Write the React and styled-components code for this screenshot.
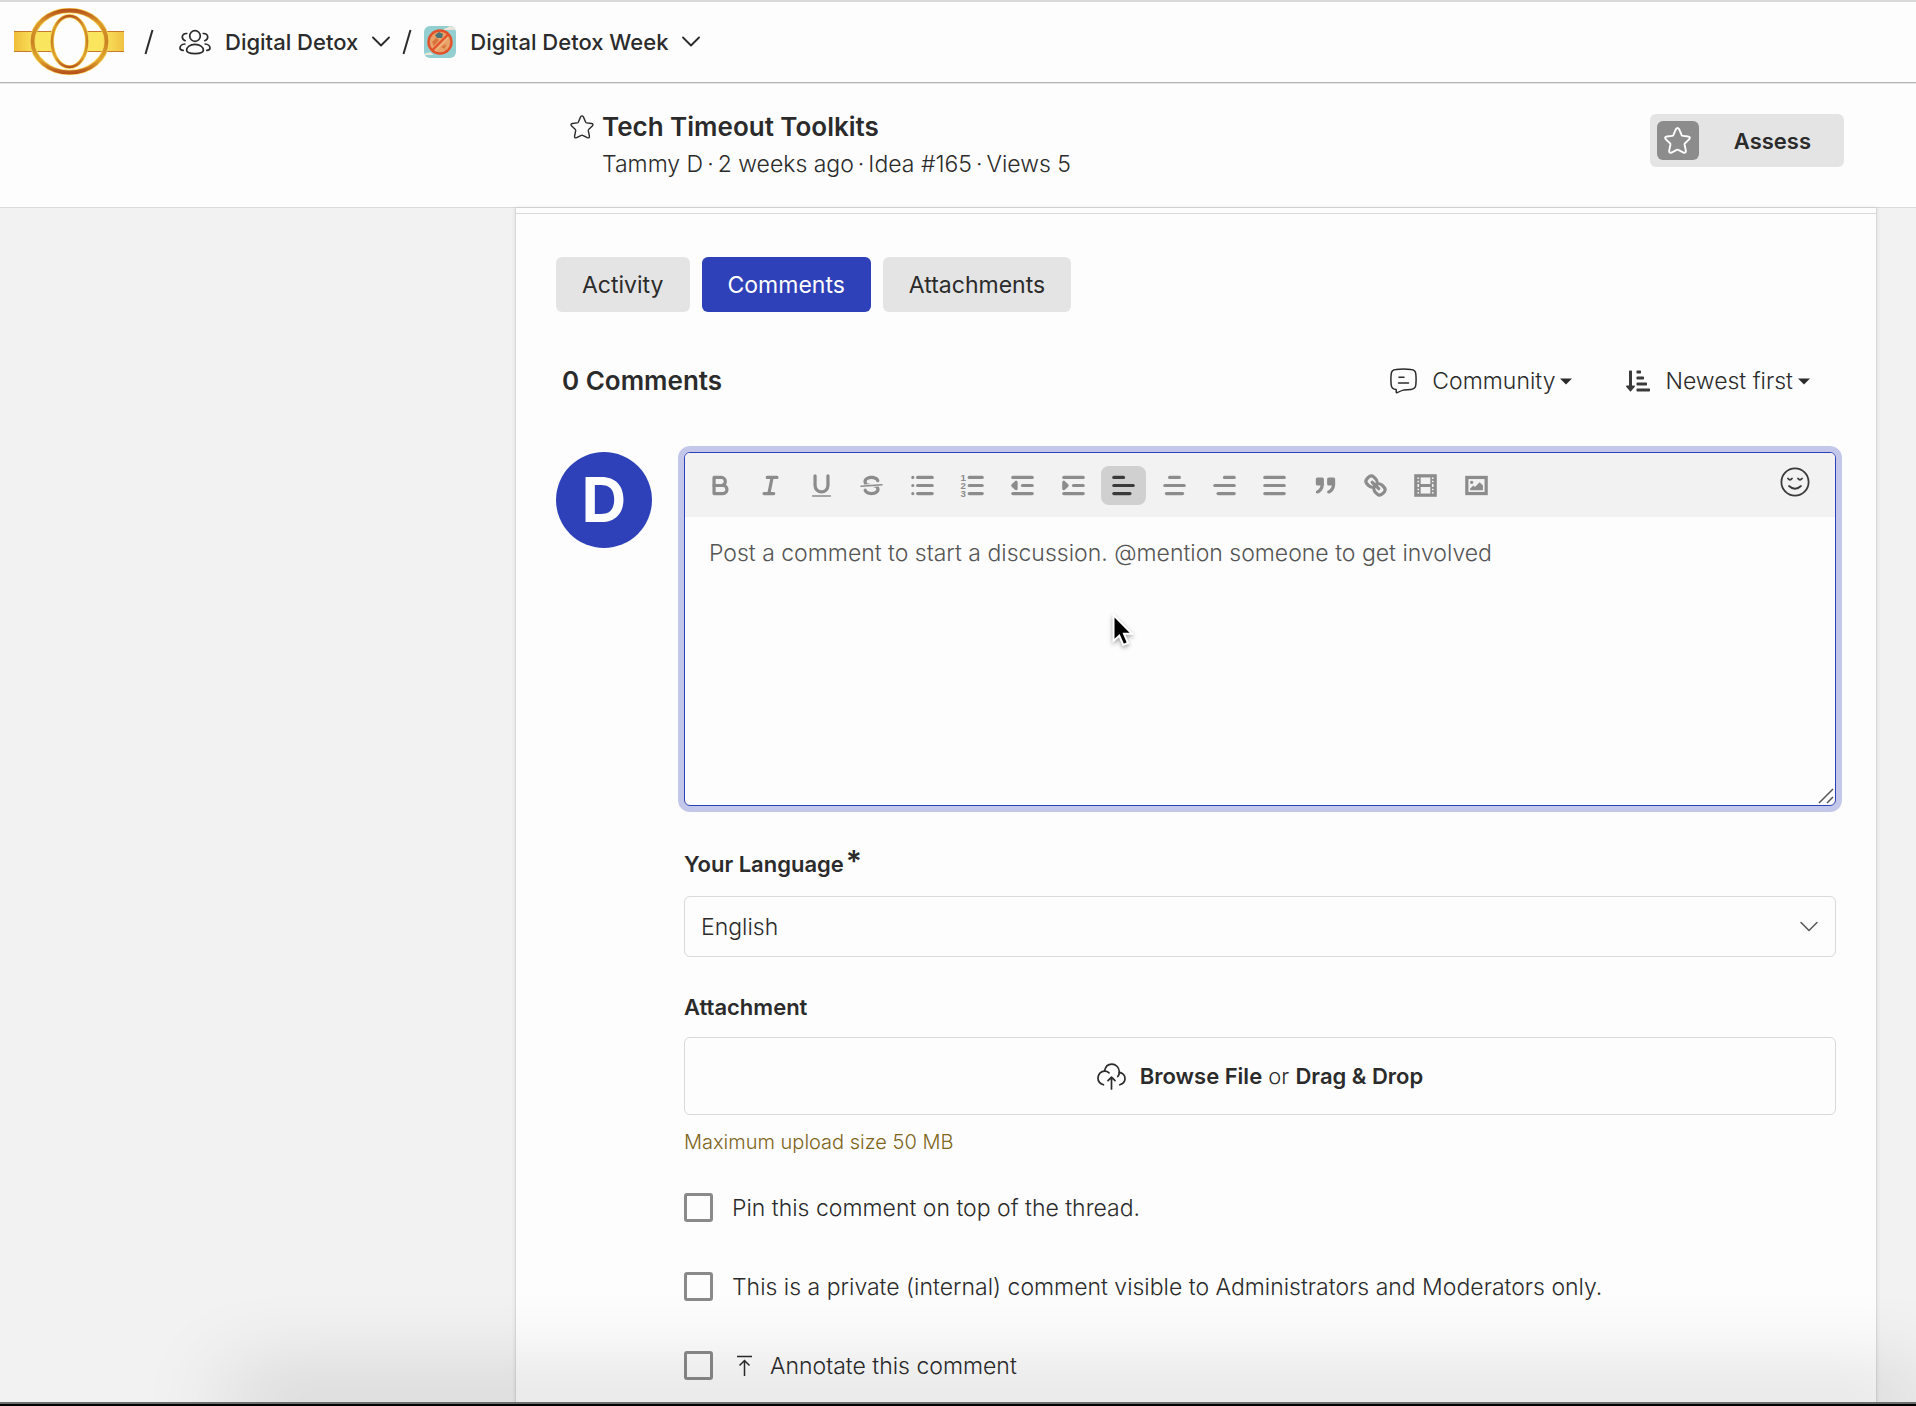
import React from 'react'
import styled, { createGlobalStyle } from 'styled-components'
import { FaSortAmountDownAlt } from 'react-icons/fa'

const ink = '#2b2b2b'
const blue = '#2f41b8'
const surface = '#fdfdfd'
const lightGrey = '#e4e4e4'
const lineGrey = '#d9d9d9'
const iconGrey = '#8c8c8c'

const GlobalStyle = createGlobalStyle`
  * {
    box-sizing: border-box;
  }

  body {
    margin: 0;
    background: #f2f2f2;
    color: ${ink};
    font-family: Inter, "Liberation Sans", sans-serif;
    font-size: 23px;
    font-weight: 350;
    line-height: 32px;
  }

  button,
  select,
  textarea {
    font: inherit;
    color: inherit;
  }
`

const Page = styled.div`
  position: relative;
  display: flex;
  flex-direction: column;
  height: 100vh;
  overflow: hidden;
`

const TopBar = styled.header`
  display: flex;
  align-items: center;
  flex: none;
  height: 83px;
  padding: 0 14px;
  background: ${surface};
  border-top: 2px solid ${lineGrey};
  border-bottom: 1px solid #b4b4b4;
`

const LogoLink = styled.a`
  display: flex;
`

const Crumb = styled.button`
  display: flex;
  align-items: center;
  gap: 14px;
  padding: 0;
  border: 0;
  background: none;
  font-size: 22px;
  font-weight: 500;
  cursor: pointer;
`

const Slash = styled.svg`
  flex: none;
  margin: 0 ${props => props.$after}px 0 ${props => props.$before}px;
`

const SubHeader = styled.section`
  display: flex;
  align-items: flex-start;
  justify-content: space-between;
  flex: none;
  height: 125px;
  padding: 27px 72px 0 570px;
  background: ${surface};
  border-top: 1px solid #e6e6e6;
  border-bottom: 1px solid ${lineGrey};
`

const Idea = styled.div`
  display: grid;
  grid-template-columns: 24px auto;
  column-gap: 8px;
`

const StarButton = styled.button`
  display: flex;
  align-items: center;
  padding: 0;
  border: 0;
  background: none;
  cursor: pointer;
`

const Title = styled.h1`
  margin: 0;
  font-size: 26px;
  font-weight: 600;
  line-height: 32px;
`

const Meta = styled.p`
  display: flex;
  grid-column: 2;
  gap: 4px;
  margin: 5px 0 0;
`

const AssessButton = styled.button`
  display: flex;
  align-items: center;
  gap: 35px;
  height: 53px;
  margin-top: 3px;
  padding: 0 33px 0 7px;
  border: 0;
  border-radius: 6px;
  background: ${lightGrey};
  font-size: 22px;
  font-weight: 600;
  cursor: pointer;
`

const AssessIcon = styled.span`
  display: flex;
  align-items: center;
  justify-content: center;
  width: 42px;
  height: 39px;
  border-radius: 6px;
  background: ${iconGrey};
  color: ${surface};
`

const Main = styled.main`
  display: flex;
  flex: 1;
  min-height: 0;
  padding: 0 39px 0 515px;
`

const Panel = styled.div`
  flex: 1;
  min-width: 0;
  padding-top: 5px;
  background: ${surface};
  border: solid ${lineGrey};
  border-width: 0 1px;
  box-shadow: 0 0 4px rgba(0, 0, 0, 0.1);
`

const PanelBody = styled.div`
  padding: 43px 40px 0;
  border-top: 1px solid ${lineGrey};
`

const Tabs = styled.nav`
  display: flex;
  gap: 12px;
`

const Tab = styled.button`
  height: 55px;
  padding: 0 26px;
  border: 0;
  border-radius: 6px;
  background: ${props => (props.$active ? blue : lightGrey)};
  color: ${props => (props.$active ? '#fff' : ink)};
  font-weight: 400;
  cursor: pointer;
`

const ListHeader = styled.div`
  display: flex;
  align-items: center;
  gap: 54px;
  margin-top: 53px;
  padding: 0 26px 0 6px;
`

const Count = styled.h2`
  flex: 1;
  margin: 0;
  font-size: 26px;
  font-weight: 600;
  line-height: 32px;
`

const Filter = styled.label`
  display: flex;
  align-items: center;
  cursor: pointer;

  svg:first-child {
    margin-right: 15px;
  }
`

const FilterSelect = styled.select`
  appearance: none;
  field-sizing: content;
  margin: 0 5px 0 0;
  padding: 0;
  border: 0;
  background: none;
  outline: none;
`

const Composer = styled.form`
  display: flex;
  gap: 32px;
  margin-top: 55px;
`

const Avatar = styled.div`
  display: flex;
  align-items: center;
  justify-content: center;
  flex: none;
  width: 96px;
  height: 96px;
  border-radius: 50%;
  background: ${blue};
  color: ${surface};
  font-size: 62px;
  font-weight: 700;
`

const Fields = styled.div`
  flex: 1;
  min-width: 0;
`

const Editor = styled.div`
  position: relative;
  border: 1px solid ${blue};
  border-radius: 6px;
  background: ${surface};
  box-shadow: 0 0 0 6px #c3c7ea;
`

const Toolbar = styled.div`
  display: flex;
  align-items: flex-start;
  justify-content: space-between;
  height: 64px;
  padding: 13px 25px 0 13px;
  border-radius: 5px 5px 0 0;
  background: #f2f2f2;
`

const Formats = styled.div`
  display: flex;
  justify-content: space-between;
  width: 801px;
`

const FormatButton = styled.button`
  display: flex;
  align-items: center;
  justify-content: center;
  width: 45px;
  height: 39px;
  padding: 0;
  border: 0;
  border-radius: 8px;
  background: ${props => (props.$active ? '#d0d0d0' : 'none')};
  color: ${props => (props.$active ? '#3a3a3a' : iconGrey)};
  cursor: pointer;

  svg {
    width: 29px;
    height: 29px;
    fill: none;
    stroke: currentColor;
    stroke-width: 2;
    stroke-linecap: round;
    stroke-linejoin: round;
  }

  .thin {
    stroke-width: 1;
  }

  .fill {
    fill: currentColor;
  }

  .solid {
    fill: currentColor;
    stroke: none;
  }

  text {
    fill: currentColor;
    stroke: none;
    font: 700 6px "Liberation Sans", sans-serif;
  }
`

const EmojiButton = styled.button`
  display: flex;
  padding: 0;
  border: 0;
  background: none;
  color: #3a3a3a;
  cursor: pointer;
`

const CommentBox = styled.textarea`
  display: block;
  width: 100%;
  height: 288px;
  padding: 20px 24px;
  border: 0;
  border-radius: 6px;
  background: none;
  outline: none;
  resize: none;

  &::placeholder {
    color: #555;
    opacity: 1;
  }
`

const ResizeGrip = styled.svg`
  position: absolute;
  right: 1px;
  bottom: 1px;
`

const Pointer = styled.svg`
  position: absolute;
  left: 37%;
  top: 160px;
  margin-left: 1px;
  filter: drop-shadow(0 2px 2px rgba(0, 0, 0, 0.35));
`

const FieldLabel = styled.label`
  display: block;
  margin-top: ${props => props.$gap}px;
  font-size: 22px;
  font-weight: 600;
`

const Required = styled.sup`
  margin-left: 2px;
  font-size: 30px;
  line-height: 0;
  vertical-align: 0;
`

const SelectBox = styled.div`
  display: grid;
  align-items: center;
  margin-top: 16px;

  > * {
    grid-area: 1 / 1;
  }

  svg {
    justify-self: end;
    margin-right: 18px;
    pointer-events: none;
  }
`

const LanguageSelect = styled.select`
  appearance: none;
  width: 100%;
  height: 61px;
  padding: 0 16px;
  border: 1px solid ${lineGrey};
  border-radius: 6px;
  background: ${surface};
`

const DropZone = styled.label`
  display: flex;
  align-items: center;
  justify-content: center;
  gap: 14px;
  height: 78px;
  margin-top: 14px;
  border: 1px solid ${lineGrey};
  border-radius: 6px;
  font-size: 22px;
  cursor: pointer;

  b {
    font-weight: 600;
  }
`

const FileInput = styled.input`
  position: absolute;
  width: 1px;
  height: 1px;
  opacity: 0;
`

const Hint = styled.p`
  margin: 11px 0 35px;
  color: #7d6420;
  font-size: 20px;
`

const CheckRow = styled.label`
  display: flex;
  align-items: center;
  height: 29px;
  margin-bottom: 50px;
  cursor: pointer;
`

const CheckBox = styled.input`
  appearance: none;
  flex: none;
  width: 29px;
  height: 29px;
  margin: 0 19px 0 0;
  border: 3px solid #8a8a8a;
  border-radius: 3px;
  background: ${surface};
`

const AnnotateIcon = styled.svg`
  margin: 0 18px 0 5px;
`

const WindowEdge = styled.div`
  position: absolute;
  left: 0;
  right: 0;
  bottom: 0;
  height: 4px;
  border-top: 2px solid #6e6e6e;
  background: #000;
`

const WindowShadow = styled.div`
  position: absolute;
  left: 240px;
  right: 0;
  bottom: 0;
  height: 4px;
  box-shadow: 0 0 90px 12px rgba(0, 0, 0, 0.3);
  pointer-events: none;
`

const Logo = () => (
  <svg width="110" height="68" viewBox="0 0 110 68" aria-hidden="true">
    <defs>
      <linearGradient id="band" x1="0" x2="1">
        <stop offset="0" stopColor="#f0bd3a" />
        <stop offset="0.200" stopColor="#fae65e" />
        <stop offset="0.800" stopColor="#fae65e" />
        <stop offset="1" stopColor="#f0c144" />
      </linearGradient>
      <linearGradient id="ring" x1="0" y1="0" x2="0" y2="1">
        <stop offset="0" stopColor="#b9541c" />
        <stop offset="0.200" stopColor="#dc9a2c" />
        <stop offset="0.500" stopColor="#c98220" />
        <stop offset="0.800" stopColor="#e2a62e" />
        <stop offset="1" stopColor="#b9541c" />
      </linearGradient>
    </defs>
    <rect x="0" y="23" width="110" height="21" fill="url(#band)" />
    <path d="M0 23.500H110M0 43.500H110" stroke="#c9792c" />
    <path d="M20 16Q54 -8 89 16L84 22H25ZM25 46H84L89 52Q54 78 20 52Z" fill="#fdfdfd" />
    <ellipse cx="55.500" cy="33.500" rx="37" ry="31" fill="none" stroke="#f5d75e" strokeWidth="5.500" />
    <ellipse cx="55.500" cy="33.500" rx="37" ry="31" fill="none" stroke="url(#ring)" strokeWidth="3.800" />
    <ellipse cx="55.500" cy="33.500" rx="17.500" ry="25.500" fill="#fdfdfd" stroke="#f5d75e" strokeWidth="4" />
    <ellipse cx="55.500" cy="33.500" rx="17.500" ry="25.500" fill="none" stroke="url(#ring)" strokeWidth="2.600" />
  </svg>
)

const CrumbSlash = ({ before, after }) => (
  <Slash $before={before} $after={after} width="10" height="28" viewBox="0 0 10 28" aria-hidden="true">
    <path d="M8.500 2L1.500 26" stroke={ink} strokeWidth="2" fill="none" />
  </Slash>
)

const Chevron = ({ thin }) => (
  <svg width="18" height="12" viewBox="0 0 18 12" fill="none" stroke={thin ? '#555' : ink} strokeWidth={thin ? 1.5 : 1.8} aria-hidden="true">
    <path d="M1 1.500L9 9.500L17 1.500" strokeLinecap="round" strokeLinejoin="round" />
  </svg>
)

const Caret = () => (
  <svg width="12" height="7" viewBox="0 0 12 7" aria-hidden="true">
    <path d="M0 0.500H12L6 6.500Z" fill={ink} />
  </svg>
)

const People = () => (
  <svg width="32" height="26" viewBox="0 0 32 26" fill="none" stroke={ink} strokeWidth="1.700" strokeLinecap="round" aria-hidden="true">
    <circle cx="16" cy="7" r="5.300" />
    <path d="M16 15.300C11 15.300 7.600 18 7.600 21.300C7.600 23.800 10 24.600 16 24.600C22 24.600 24.400 23.800 24.400 21.300C24.400 18 21 15.300 16 15.300Z" />
    <path d="M7.800 4.500C5 4.300 3.300 6 3.300 8C3.300 9.800 4.500 11 6.200 11.700" />
    <path d="M24.200 4.500C27 4.300 28.700 6 28.700 8C28.700 9.800 27.500 11 25.800 11.700" />
    <path d="M5.800 15C3 15.200 1 17 1 19C1 20.500 2.400 21.300 4.200 21.300" />
    <path d="M26.200 15C29 15.200 31 17 31 19C31 20.500 29.600 21.300 27.800 21.300" />
  </svg>
)

const DetoxBadge = () => (
  <svg width="32" height="32" viewBox="0 0 32 32" aria-hidden="true">
    <rect width="32" height="32" rx="6" fill="#93cfd0" />
    <path d="M20 4Q20 2 23 2Q25 -1 28 1Q31 1 31 4ZM1 29Q1 26 4 27Q7 25 9 29Z" fill="#ece6d8" />
    <circle cx="16" cy="16" r="10.500" fill="#e9a268" />
    <path d="M11 9L15 6L19 8L18 12L13 12Z" fill="#4c7477" />
    <path d="M8 16L12 12L15 14L10 20ZM17 21L22 18L21 23Z" fill="#d9743f" />
    <circle cx="16" cy="16" r="11.500" fill="none" stroke="#e2512a" strokeWidth="2.400" />
    <path d="M8.500 24L24 8.500" stroke="#e2512a" strokeWidth="2.200" />
    <path d="M11 25L24 12" stroke="#f6c79c" strokeWidth="0.800" />
  </svg>
)

const Star = ({ size = 24, stroke = 1.6 }) => (
  <svg width={size} height={size} viewBox="0 0 24 24" fill="none" stroke="currentColor" strokeWidth={stroke} strokeLinejoin="round" aria-hidden="true">
    <path d="M10.600 1.900Q12 -0.100 13.400 1.900L15.700 7.200Q16 7.800 16.700 7.900L21.600 8.500Q24 9 22.300 11L18.600 14.600Q18.200 15.100 18.300 15.700L19.400 21Q19.600 23.500 17.300 22.700L12.700 20.300Q12 19.900 11.300 20.300L6.700 22.700Q4.400 23.500 4.600 21L5.700 15.700Q5.800 15.100 5.400 14.600L1.700 11Q0 9 2.400 8.500L7.300 7.900Q8 7.800 8.300 7.200Z" />
  </svg>
)

const CommentIcon = () => (
  <svg width="27" height="26" viewBox="0 0 27 26" fill="none" stroke={ink} strokeWidth="1.500" strokeLinecap="round" strokeLinejoin="round" aria-hidden="true">
    <path d="M6 1.500Q13.500 0.500 21 1.500Q25.500 1.700 25.800 6Q26.400 11.500 25.800 17Q25.500 21 21 21.400L14 21.900Q11 22.800 7.200 24.600Q6.200 25 6.200 23.900V21.500Q1.600 21.300 1.200 17Q0.600 11.500 1.200 6Q1.500 1.700 6 1.500Z" />
    <path d="M9 9.200H14M8.500 15H18.500" />
  </svg>
)

const Smiley = () => (
  <svg width="30" height="31" viewBox="0 -1 30 31" fill="none" stroke="currentColor" strokeWidth="1.800" strokeLinecap="round" aria-hidden="true">
    <circle cx="15" cy="15" r="13.600" />
    <path d="M8 11.500Q10 14 12 11.500M18 11.500Q20 14 22 11.500M9 19Q15 24.500 21 19" />
  </svg>
)

const UploadIcon = () => (
  <svg width="29" height="27" viewBox="0 0 29 27" fill="none" stroke={ink} strokeWidth="1.700" strokeLinecap="round" strokeLinejoin="round" aria-hidden="true">
    <path d="M6.500 21.800C3 20.800 1 18.200 1 15C1 11 4 8.200 7.500 8.200C9.300 8.200 11 8.800 12 9.900" />
    <path d="M7.500 8C8.300 4 11 1.200 14.800 1.200C18.800 1.200 22 4.200 22.300 8.500C22.400 10.500 21.800 12.300 20.800 13.500" />
    <path d="M22.300 9.300C25.500 9.800 28 12.300 28 15.600C28 18.600 26 20.900 22.800 21.800" />
    <path d="M14.500 26V14.500M11 17.700L14.500 14.200L18 17.700" />
  </svg>
)

const lines = rows => rows.map(([x1, x2, y]) => <line key={y} x1={x1} x2={x2} y1={y} y2={y} />)

const formats = [
  ['Bold', (
    <>
      <path d="M5,4H9.500A2.500,2.500,0,0,1,12,6.500v0A2.500,2.500,0,0,1,9.500,9H5V4Z" />
      <path d="M5,9h5.500A2.500,2.500,0,0,1,13,11.500v0A2.500,2.500,0,0,1,10.500,14H5V9Z" />
    </>
  )],
  ['Italic', <path d="M7 4H13M5 14H11M8 14L10 4" />],
  ['Underline', (
    <>
      <path d="M5,3V9a4.012,4.012,0,0,0,4,4H9a4.012,4.012,0,0,0,4-4V3" />
      <rect className="solid" x="3" y="15" width="12" height="1" rx="0.500" />
    </>
  )],
  ['Strike', (
    <>
      <line className="thin" x1="15.500" x2="2.500" y1="8.500" y2="9.500" />
      <path className="solid" d="M9.007,8C6.542,7.791,6,7.519,6,6.500,6,5.792,7.283,5,9,5c1.571,0,2.765.679,2.969,1.309a1,1,0,0,0,1.900-.617C13.356,4.106,11.354,3,9,3,6.200,3,4,4.538,4,6.500a3.200,3.200,0,0,0,.5,1.843Z" />
      <path className="solid" d="M8.984,10C11.457,10.208,12,10.479,12,11.500c0,.708-1.283,1.500-3,1.500-1.571,0-2.765-.679-2.969-1.309a1,1,0,1,0-1.900.617C4.644,13.894,6.646,15,9,15c2.800,0,5-1.538,5-3.500a3.200,3.200,0,0,0-.5-1.843Z" />
    </>
  )],
  ['Bullet list', (
    <>
      {lines([[6, 15, 4], [6, 15, 9], [6, 15, 14]])}
      <path d="M3 4H3M3 9H3M3 14H3" />
    </>
  )],
  ['Numbered list', (
    <>
      {lines([[7, 15, 4], [7, 15, 9], [7, 15, 14]])}
      <text x="1.500" y="6">1</text>
      <text x="1.500" y="11">2</text>
      <text x="1.500" y="16">3</text>
    </>
  )],
  ['Outdent', (
    <>
      {lines([[3, 15, 4], [9, 15, 9], [3, 15, 14]])}
      <path className="fill" d="M5 7V11L3 9Z" />
    </>
  )],
  ['Indent', (
    <>
      {lines([[3, 15, 4], [9, 15, 9], [3, 15, 14]])}
      <path className="fill" d="M3 7V11L5 9Z" />
    </>
  )],
  ['Align left', lines([[3, 9, 4], [3, 15, 9], [3, 13, 14]])],
  ['Align center', lines([[6, 12, 4], [3, 15, 9], [4, 14, 14]])],
  ['Align right', lines([[9, 15, 4], [3, 15, 9], [5, 15, 14]])],
  ['Justify', lines([[3, 15, 4], [3, 15, 9], [3, 15, 14]])],
  ['Quote', (
    <>
      <rect className="fill" x="4" y="5" width="3" height="3" />
      <rect className="fill" x="11" y="5" width="3" height="3" />
      <path d="M7,8c0,4.031-3,5-3,5M14,8c0,4.031-3,5-3,5" />
    </>
  )],
  ['Link', (
    <>
      <line x1="7" x2="11" y1="7" y2="11" />
      <path d="M8.900,4.577a3.476,3.476,0,0,1,.36,4.679A3.476,3.476,0,0,1,4.577,8.900C3.185,7.500,2.035,6.400,4.217,4.217S7.500,3.185,8.900,4.577Z" />
      <path d="M13.423,9.100a3.476,3.476,0,0,0-4.679-.36,3.476,3.476,0,0,0,.36,4.679c1.392,1.392,2.500,2.542,4.679.36S14.815,10.500,13.423,9.100Z" />
    </>
  )],
  ['Video', (
    <>
      <rect x="3" y="3" width="12" height="12" strokeLinejoin="miter" />
      <path className="solid" d="M5 3H6V15H5ZM12 3H13V15H12ZM5 8H13V10H5ZM3 5H6V6H3ZM3 7H6V8H3ZM3 10H6V11H3ZM3 12H6V13H3ZM12 5H15V6H12ZM12 7H15V8H12ZM12 10H15V11H12ZM12 12H15V13H12Z" />
    </>
  )],
  ['Image', (
    <>
      <rect x="3" y="4" width="12" height="10" strokeLinejoin="miter" />
      <circle className="solid" cx="6" cy="7" r="1" />
      <path className="solid" d="M5 12V11L7 9L8 10L11 7L13 9V12Z" />
    </>
  )],
]

const Header = () => (
  <TopBar>
    <LogoLink href="#home" aria-label="Home"><Logo /></LogoLink>
    <CrumbSlash before={20} after={25} />
    <Crumb type="button"><People />Digital Detox<Chevron /></Crumb>
    <CrumbSlash before={12} after={12} />
    <Crumb type="button"><DetoxBadge />Digital Detox Week<Chevron /></Crumb>
  </TopBar>
)

const IdeaHeader = () => (
  <SubHeader>
    <Idea>
      <StarButton type="button" aria-label="Favourite"><Star stroke={1.4} /></StarButton>
      <Title>Tech Timeout Toolkits</Title>
      <Meta>
        <span>Tammy D</span>
        <span>·</span>
        <span>2 weeks ago</span>
        <span>·</span>
        <span>Idea #165</span>
        <span>·</span>
        <span>Views 5</span>
      </Meta>
    </Idea>
    <AssessButton type="button">
      <AssessIcon><Star size={27} stroke={1.7} /></AssessIcon>
      Assess
    </AssessButton>
  </SubHeader>
)

const RichEditor = () => (
  <Editor>
    <Toolbar>
      <Formats>
        {formats.map(([name, icon]) => (
          <FormatButton key={name} type="button" aria-label={name} $active={name === 'Align left'}>
            <svg viewBox="0 0 18 18" aria-hidden="true">{icon}</svg>
          </FormatButton>
        ))}
      </Formats>
      <EmojiButton type="button" aria-label="Emoji"><Smiley /></EmojiButton>
    </Toolbar>
    <CommentBox
      aria-label="Comment"
      placeholder="Post a comment to start a discussion. @mention someone to get involved"
    />
    <ResizeGrip width="16" height="16" viewBox="0 0 16 16" aria-hidden="true">
      <path d="M1 15L15 1M9 15L15 9" stroke="#555" strokeWidth="1.500" />
    </ResizeGrip>
    <Pointer width="22" height="36" viewBox="0 0 22 36" aria-hidden="true">
      <path d="M1.500 2V28L7.300 22.600L11.300 32L16 30L12 20.800H20Z" fill="#000" stroke="#fff" strokeWidth="2" />
    </Pointer>
  </Editor>
)

const Check = ({ icon, children }) => (
  <CheckRow>
    <CheckBox type="checkbox" />
    {icon}
    {children}
  </CheckRow>
)

const CommentForm = () => (
  <Composer>
    <Avatar>D</Avatar>
    <Fields>
      <RichEditor />
      <FieldLabel htmlFor="language" $gap={42}>Your Language<Required>*</Required></FieldLabel>
      <SelectBox>
        <LanguageSelect id="language" defaultValue="English">
          <option>English</option>
        </LanguageSelect>
        <Chevron thin />
      </SelectBox>
      <FieldLabel htmlFor="attachment" $gap={34}>Attachment</FieldLabel>
      <DropZone>
        <UploadIcon />
        <span><b>Browse File</b> or <b>Drag &amp; Drop</b></span>
        <FileInput id="attachment" type="file" />
      </DropZone>
      <Hint>Maximum upload size 50 MB</Hint>
      <Check>Pin this comment on top of the thread.</Check>
      <Check>This is a private (internal) comment visible to Administrators and Moderators only.</Check>
      <Check
        icon={(
          <AnnotateIcon width="15" height="22" viewBox="0 0 15 22" fill="none" stroke={ink} strokeWidth="1.500" aria-hidden="true">
            <path d="M0 1.500H15M7.500 21V6M2.500 10.500L7.500 5.500L12.500 10.500" />
          </AnnotateIcon>
        )}
      >
        Annotate this comment
      </Check>
    </Fields>
  </Composer>
)

const App = () => (
  <Page>
    <GlobalStyle />
    <Header />
    <IdeaHeader />
    <Main>
      <Panel>
        <PanelBody>
          <Tabs>
            <Tab type="button">Activity</Tab>
            <Tab type="button" $active>Comments</Tab>
            <Tab type="button">Attachments</Tab>
          </Tabs>
          <ListHeader>
            <Count>0 Comments</Count>
            <Filter>
              <CommentIcon />
              <FilterSelect aria-label="Audience"><option>Community</option></FilterSelect>
              <Caret />
            </Filter>
            <Filter>
              <FaSortAmountDownAlt size={24} color="#3a3a3a" />
              <FilterSelect aria-label="Sort order"><option>Newest first</option></FilterSelect>
              <Caret />
            </Filter>
          </ListHeader>
          <CommentForm />
        </PanelBody>
      </Panel>
    </Main>
    <WindowShadow />
    <WindowEdge />
  </Page>
)

export default App
